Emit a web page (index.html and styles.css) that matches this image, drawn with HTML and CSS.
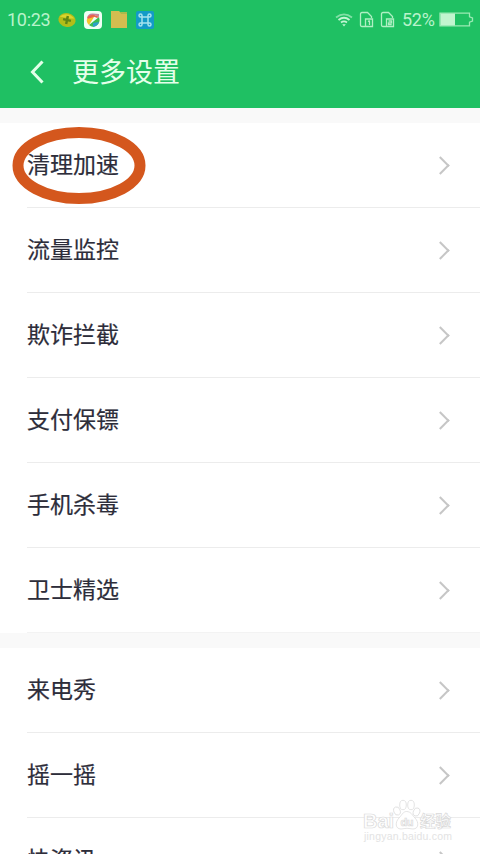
FILE: index.html
```html
<!DOCTYPE html>
<html lang="zh-CN">
<head>
<meta charset="utf-8">
<title>更多设置</title>
<link rel="stylesheet" href="styles.css">
</head>
<body>
<div class="screen">
  <header class="header">
    <div class="status">
      <span class="clock">10:23</span>
      <div class="apps">
        <svg width="20" height="20" viewBox="0 0 20 20"><g transform="rotate(12 10 10)"><ellipse cx="10" cy="10" rx="8.7" ry="7" fill="#b3bd18"/><path d="M2 8Q9 1 17 7L12 8 10 6 8 8z" fill="#dad52d"/><path d="M10 6v8M6 10h8" stroke="#5f8714" stroke-width="2.4"/></g></svg>
        <svg width="20" height="20" viewBox="0 0 20 20"><rect x="1" y="1" width="18" height="18" rx="4" fill="#effff4"/><path d="M4 8Q5 3 10 3.500L16 4v3Q10 3 4 8z" fill="#c6849e"/><path d="M4 8Q7 4 12 5L7 12z" fill="#ee5f4c"/><path d="M4 9l7-2-5 8Q3 12 4 9z" fill="#f4c52b"/><path d="M6 15l10-8Q18 13 13 16 9 18 6 15z" fill="#39bd51"/><path d="M10 13l6-1Q15 16 10 17z" fill="#2d9fcb"/><path d="M8 6Q12 4 16 7L14 8Q11 6 8 7z" fill="#e8684c"/></svg>
        <svg width="20" height="20" viewBox="0 0 20 20"><path d="M2 1h8l2 2h6v15H2z" fill="#d2bd50"/><path d="M11 2h7v2h-6z" fill="#a9ba4b"/></svg>
        <svg width="20" height="20" viewBox="0 0 20 20"><rect x="1" y="1" width="18" height="18" rx="2" fill="#139bc7"/><path d="M7 7h6v6H7zM7 7H5.500Q4 7 4 5.500T5.500 4 7 5.500zM13 7V5.500Q13 4 14.500 4T16 5.500 14.500 7zM7 13v1.500Q7 16 5.500 16T4 14.500 5.500 13zM13 13h1.500q1.500 0 1.500 1.500T14.500 16 13 14.500z" fill="none" stroke="#a5e4ed" stroke-width="1.500"/></svg>
      </div>
      <div class="signals">
        <svg class="wifi" width="18" height="14" viewBox="0 0 18 14" fill="none" stroke="#c4f5d4" stroke-width="1.800"><path d="M1 4.500Q9-1.700 17 4.500" opacity=".6"/><path d="M3.500 7Q9 2.500 14.500 7M6 9.500Q9 7.200 12 9.500"/><path d="M7.200 11.200h3.600L9 13.400z" fill="#c4f5d4" stroke="none"/></svg>
        <svg class="sim" width="15" height="17" viewBox="0 0 15 17" fill="none" stroke="#afefc3" stroke-width="1.300"><path d="M6 15.500H3Q1.500 15.500 1.500 14V3Q1.500 1.500 3 1.500h5.500L12.500 5.500V7"/><path d="M6.500 8h7v7.500h-7zM10.500 9.500v4.500M9 10.500l1.500-1"/></svg>
        <svg class="sim" width="15" height="17" viewBox="0 0 15 17" fill="none" stroke="#afefc3" stroke-width="1.300"><path d="M6 15.500H3Q1.500 15.500 1.500 14V3Q1.500 1.500 3 1.500h5.500L12.500 5.500V7"/><path d="M6.500 8h7v7.500h-7zM8.500 10h3v1.800h-3v1.700h3.200"/></svg>
        <span class="percent">52%</span>
        <svg class="battery" width="35" height="15" viewBox="0 0 35 15"><path d="M1 1.200h29.500v3.600L33.500 6v3l-3 1.200v3.600H1z" fill="none" stroke="#9aeab4" stroke-width="1.300"/><path d="M1.500 1.500h14.500v12H1.500z" fill="#c1f5cf"/></svg>
      </div>
    </div>
    <div class="titlebar">
      <svg class="back" width="16" height="26" viewBox="0 0 16 26"><path d="M13.500 2.500L3.500 13l10 10.500" fill="none" stroke="#e2ffe8" stroke-width="3"/></svg>
      <h1>更多设置</h1>
    </div>
  </header>
  <main>
    <ul class="group">
      <li class="row"><span>清理加速</span><i class="chevron"></i></li>
      <li class="row"><span>流量监控</span><i class="chevron"></i></li>
      <li class="row"><span>欺诈拦截</span><i class="chevron"></i></li>
      <li class="row"><span>支付保镖</span><i class="chevron"></i></li>
      <li class="row"><span>手机杀毒</span><i class="chevron"></i></li>
      <li class="row"><span>卫士精选</span><i class="chevron"></i></li>
    </ul>
    <ul class="group">
      <li class="row"><span>来电秀</span><i class="chevron"></i></li>
      <li class="row"><span>摇一摇</span><i class="chevron"></i></li>
      <li class="row"><span>快资讯</span><i class="chevron"></i></li>
    </ul>
  </main>
  <svg class="ring" width="136" height="80" viewBox="0 0 136 80"><ellipse cx="68" cy="40.500" rx="61" ry="33" fill="none" stroke="#d4571d" stroke-width="11"/></svg>
  <svg class="watermark" width="96" height="50" viewBox="0 0 96 50">
    <g fill="#fff" stroke="#d9d9d9" stroke-width=".7">
      <text class="wm-logo" x="3" y="33" textLength="31">Bai</text>
      <ellipse cx="37" cy="16" rx="3.200" ry="4.200" transform="rotate(-20 37 16)"/><ellipse cx="43" cy="10" rx="3.300" ry="4.700"/><ellipse cx="51" cy="10" rx="3.300" ry="4.700"/><ellipse cx="56.500" cy="17" rx="3.200" ry="4.200" transform="rotate(20 56.500 17)"/>
      <path d="M46.500 16.500C51 16.500 52 20 55 23C59 27 59 34 53 34Q47 32.500 41 34C35 34 35 27 39 23C42 20 43 16.500 46.500 16.500z"/>
      <text class="wm-du" x="40.500" y="31" textLength="13">du</text>
      <text class="wm-cn" x="60" y="32" textLength="31">经验</text>
    </g>
    <text class="wm-url" x="4" y="45" textLength="88">jingyan.baidu.com</text>
  </svg>
</div>
</body>
</html>
```
FILE: styles.css
```css
* { box-sizing: border-box; }
body {
  margin: 0;
  font-family: Roboto, "Noto Sans CJK SC", sans-serif;
}
.screen {
  position: relative;
  width: 480px;
  height: 854px;
  overflow: hidden;
  background: #f9f9f9;
}
.header {
  height: 108px;
  background: #1fc063;
  color: #e5ffea;
}
.status {
  display: flex;
  align-items: center;
  height: 39px;
  padding: 0 6px 0 7px;
  font-size: 18px;
  line-height: 38px;
  color: #b9f3cb;
}
.clock { width: 43px; letter-spacing: -0.3px; }
.apps { display: flex; gap: 6px; margin-left: 7px; }
.signals { display: flex; align-items: center; margin-left: auto; }
.wifi { margin-right: 6px; }
.sim { margin-right: 6px; }
.sim + .percent { margin-left: 1px; }
.percent { width: 34px; letter-spacing: -0.3px; }
.battery { margin-left: 3px; }
.titlebar {
  display: flex;
  align-items: center;
  height: 66px;
  padding-left: 29px;
}
h1 {
  margin: 1px 0 0 27px;
  font-size: 27px;
  line-height: 40px;
  font-weight: 400;
}
.group {
  margin: 15px 0 0;
  padding: 0;
  list-style: none;
  background: #fff;
}
.row {
  display: flex;
  align-items: center;
  justify-content: space-between;
  height: 85px;
  margin-left: 27px;
  padding-right: 33px;
  border-bottom: 1px solid #ececec;
  font-size: 23px;
  line-height: 34px;
  font-weight: 400;
  color: #2d2d3a;
}
.row:last-child { border-bottom-color: #f3f3f3; }
.row span { margin-top: 1px; -webkit-text-stroke: 0.2px #2d2d3a; }
.chevron {
  width: 13px;
  height: 13px;
  border: solid #c6c6c6;
  border-width: 2px 2px 0 0;
  transform: rotate(45deg);
}
.ring { position: absolute; left: 11px; top: 125px; }
.watermark { position: absolute; left: 360px; top: 795px; }
.wm-logo { font: 700 20px "Liberation Sans", sans-serif; }
.wm-du { font: 700 11px "Liberation Sans", sans-serif; }
.wm-cn { font: 700 15.5px "Noto Sans CJK SC", sans-serif; }
.wm-url { font: 10.5px "Liberation Sans", sans-serif; fill: #e3e3e3; }
```
